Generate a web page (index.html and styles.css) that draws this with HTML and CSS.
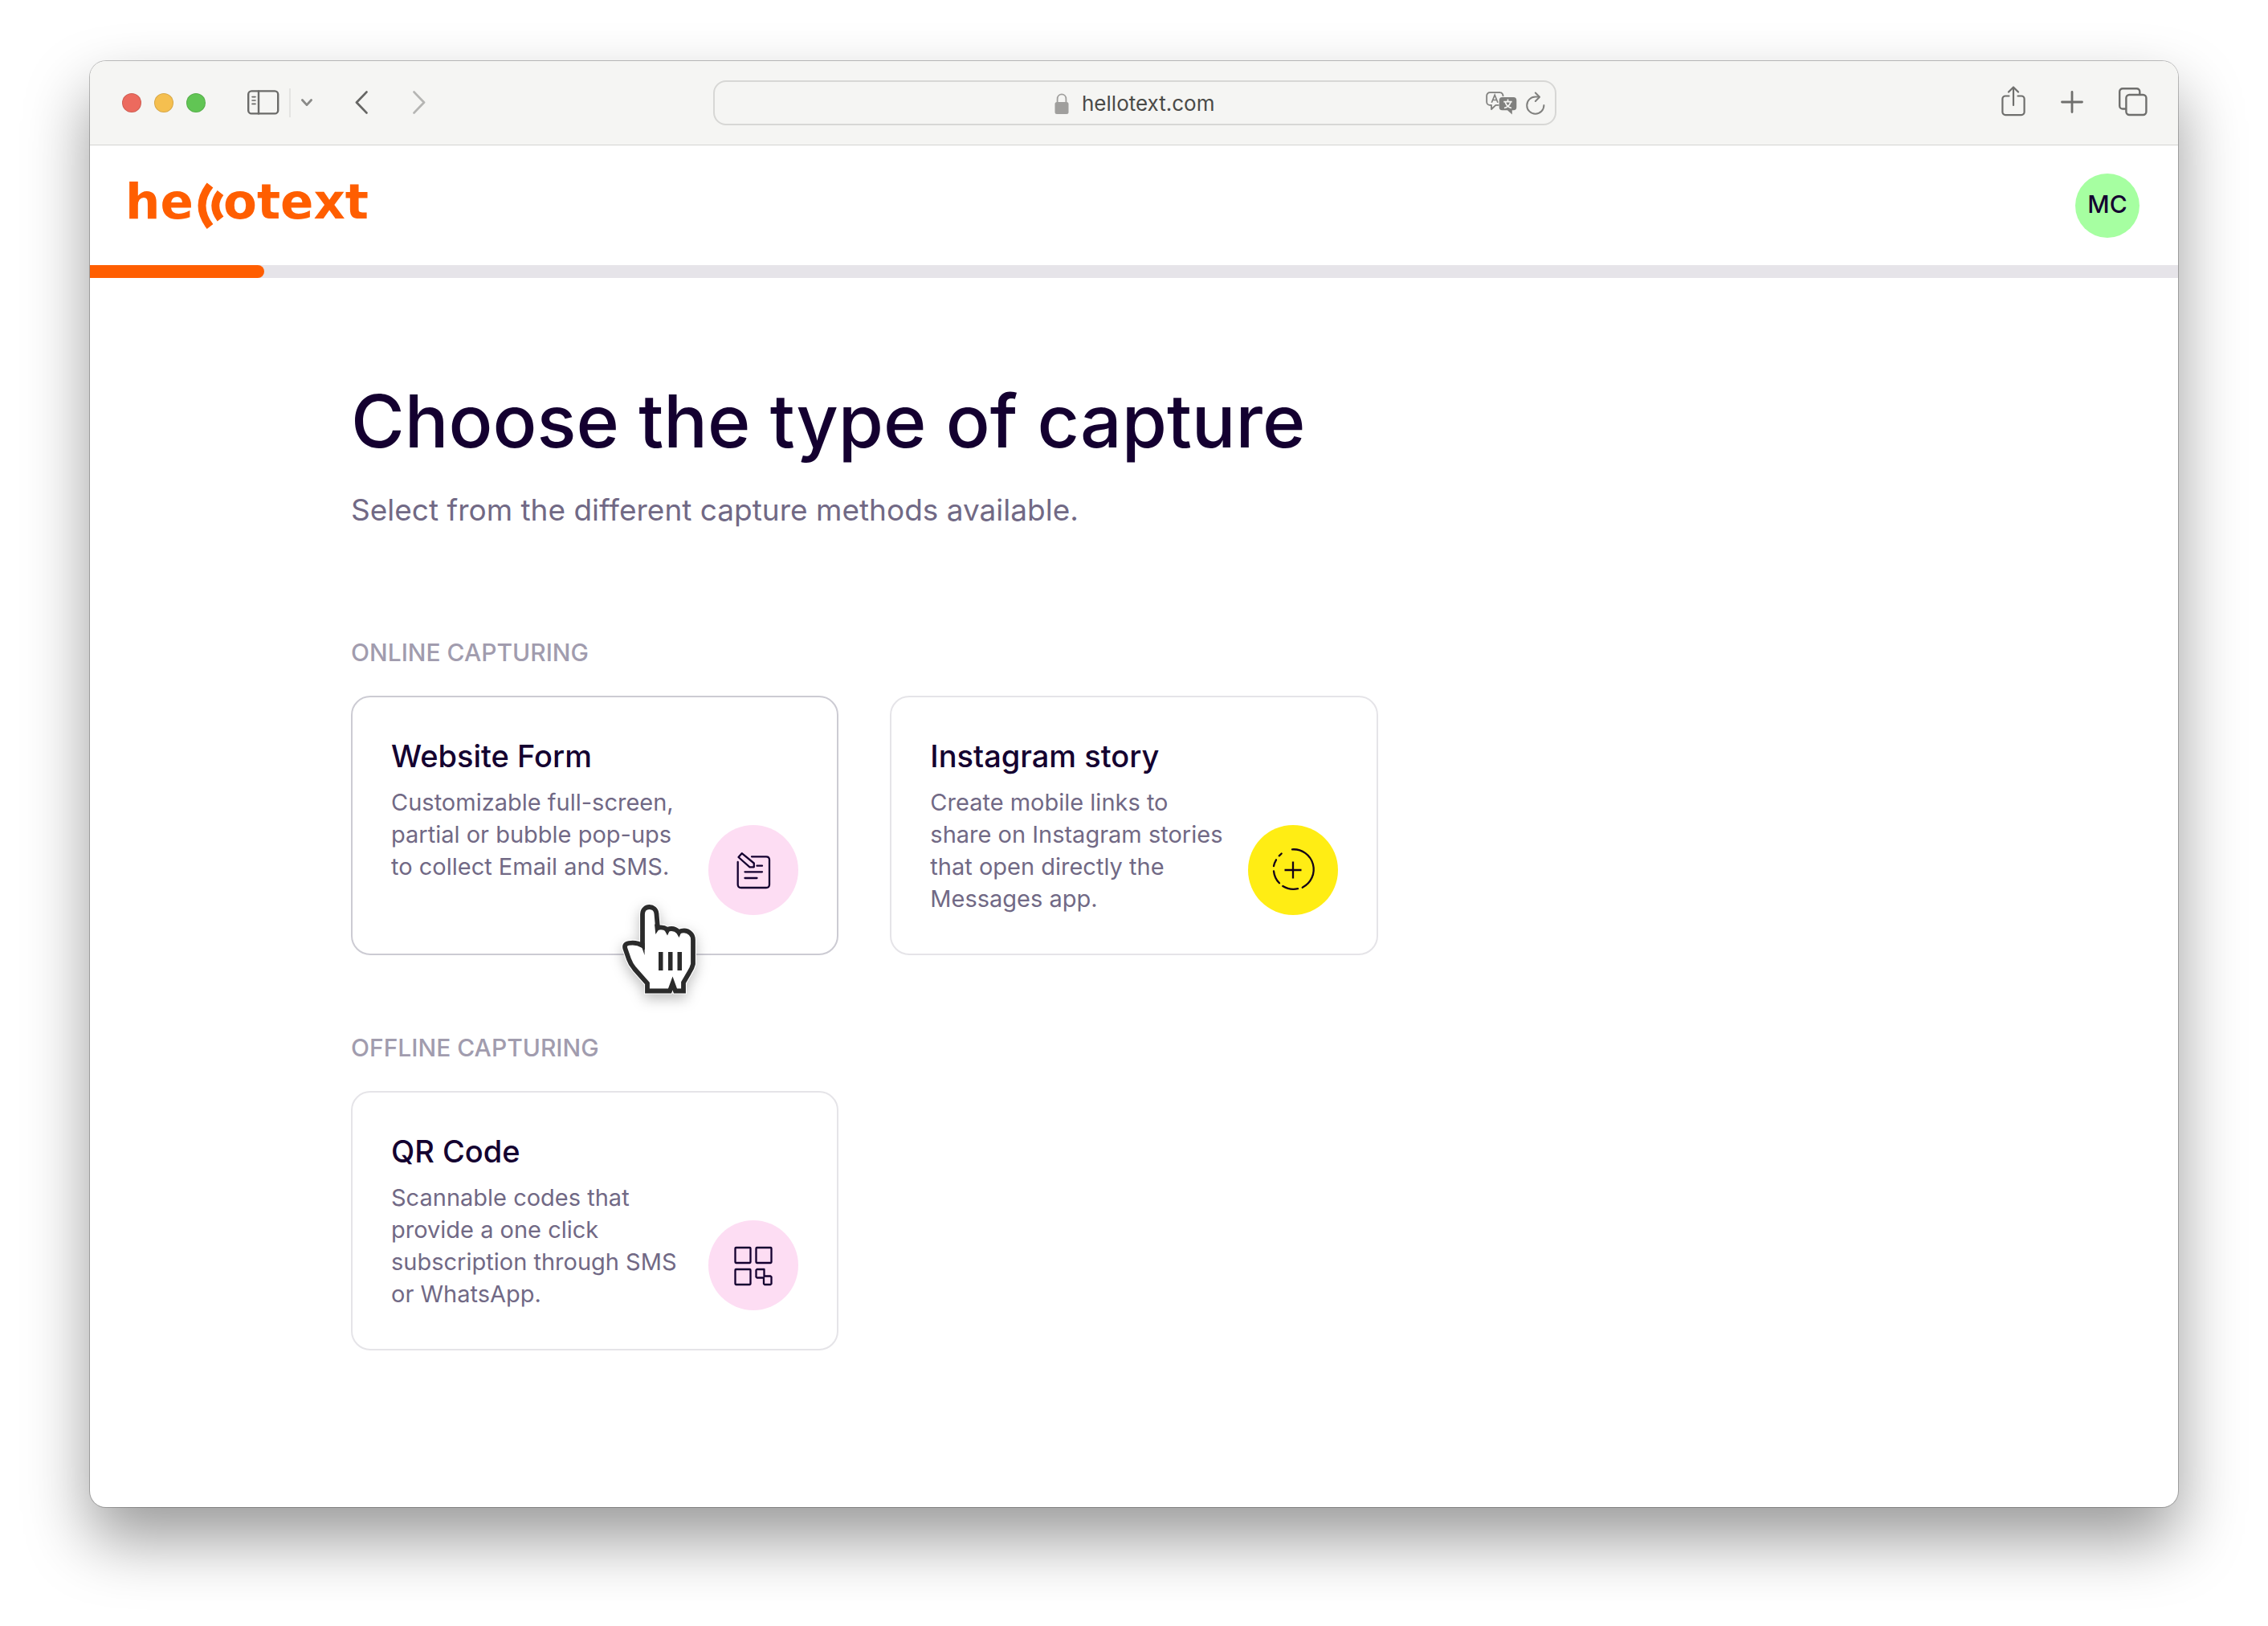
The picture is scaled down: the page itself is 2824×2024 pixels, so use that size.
FILE: index.html
```
<!DOCTYPE html>
<html lang="en">
<head>
<meta charset="utf-8">
<meta name="viewport" content="width=device-width, initial-scale=1">
<title>Hellotext</title>
<link rel="stylesheet" href="styles.css">
</head>
<body>
<div class="window">
  <div class="toolbar">
    <div class="toolbar-left">
      <div class="lights">
        <button class="light light-close" aria-label="Close"></button>
        <button class="light light-min" aria-label="Minimize"></button>
        <button class="light light-max" aria-label="Zoom"></button>
      </div>
      <div class="sidebar-controls">
        <button class="tool" aria-label="Show sidebar">
          <svg width="40" height="32" viewBox="0 0 40 32" fill="none" stroke="#6b6b69" stroke-width="2.4" stroke-linecap="round"><rect x="1.2" y="1.4" width="37" height="28" rx="4"/><path d="M14 1.4V29.4"/><path d="M6 8.6H10M6 13H10M6 17.4H10" stroke-width="1.6"/></svg>
        </button>
        <span class="divider"></span>
        <button class="tool" aria-label="Sidebar options">
          <svg width="16" height="12" viewBox="0 0 16 12" fill="none" stroke="#8a8a88" stroke-width="2.8" stroke-linecap="round" stroke-linejoin="round"><path d="M2.4 2.5L8 8.6L13.6 2.5"/></svg>
        </button>
      </div>
      <div class="history">
        <button class="tool" aria-label="Back">
          <svg width="16" height="30" viewBox="0 0 16 30" fill="none" stroke="#666664" stroke-width="2.8" stroke-linecap="round" stroke-linejoin="round"><path d="M14.4 1.6L2 14.5L14.4 27.4"/></svg>
        </button>
        <button class="tool" aria-label="Forward">
          <svg width="16" height="30" viewBox="0 0 16 30" fill="none" stroke="#b5b5b3" stroke-width="2.8" stroke-linecap="round" stroke-linejoin="round"><path d="M1.6 1.6L14 14.5L1.6 27.4"/></svg>
        </button>
      </div>
    </div>
    <div class="address">
      <label class="address-field">
        <svg width="18" height="28" viewBox="0 0 18 28" role="img" aria-label="Secure"><rect x="0.5" y="12" width="17" height="15" rx="2.5" fill="#a09f9d"/><path d="M3.6 13V8.4C3.6 0.4 14.4 0.4 14.4 8.4V13" fill="none" stroke="#a09f9d" stroke-width="1.8"/></svg>
        <input class="address-input" type="text" value="hellotext.com" aria-label="Address">
      </label>
      <div class="address-actions">
        <button class="tool" aria-label="Translate">
          <svg width="40" height="30" viewBox="0 0 40 30"><path d="M18 1.2H5A3.8 3.8 0 0 0 1.2 5V13A3.8 3.8 0 0 0 5 16.8H7V22L12.4 16.8H16.5M21.5 6V5A3.8 3.8 0 0 0 17.7 1.2" fill="none" stroke="#80807e" stroke-width="1.8" stroke-linejoin="round"/><path d="M7.3 13.8L11.2 4.2L15 13.8M8.6 10.5H13.8" fill="none" stroke="#80807e" stroke-width="1.7"/><path d="M20.5 7H34.5A3.8 3.8 0 0 1 38.3 10.8V19.5A3.8 3.8 0 0 1 34.5 23.3H32.8V28.5L27 23.3H20.5A3.8 3.8 0 0 1 16.7 19.5V10.8A3.8 3.8 0 0 1 20.5 7Z" fill="#80807e"/><path d="M27.5 9.5V12M22.3 12.7H32.7M31 13C30 16.5 27 19.5 23 20.5M24.2 13C25.2 16.5 28 19.5 32 20.5" fill="none" stroke="#f5f5f3" stroke-width="1.7"/></svg>
        </button>
        <button class="tool" aria-label="Reload">
          <svg width="24" height="30" viewBox="0 0 24 30" fill="none" stroke="#80807e" stroke-width="2" stroke-linecap="round" stroke-linejoin="round"><path d="M22.4 17A10.6 10.6 0 1 1 11.8 6.500H16.5"/><path d="M11.8 1.5L17 6.7L11.8 12"/></svg>
        </button>
      </div>
    </div>
    <div class="toolbar-right">
      <button class="tool" aria-label="Share">
        <svg width="30" height="42" viewBox="0 0 30 42" fill="none" stroke="#6f6f6d" stroke-width="2.2" stroke-linecap="round" stroke-linejoin="round"><path d="M9.5 12.5H5A3.6 3.6 0 0 0 1.4 16.1V32.5A3.6 3.6 0 0 0 5 36.1H25A3.6 3.6 0 0 0 28.6 32.5V16.1A3.6 3.6 0 0 0 25 12.5H20.5"/><path d="M15 24V1.5M9 7.5L15 1.5L21 7.5"/></svg>
      </button>
      <button class="tool" aria-label="New tab">
        <svg width="28" height="30" viewBox="0 0 28 30" fill="none" stroke="#6f6f6d" stroke-width="2.8" stroke-linecap="round"><path d="M14 1.5V26.5M1.5 14H26.5"/></svg>
      </button>
      <button class="tool" aria-label="Tab overview">
        <svg width="36" height="38" viewBox="0 0 36 38" fill="none" stroke="#6f6f6d" stroke-width="2.4"><rect x="9.4" y="9" width="25" height="25" rx="4"/><path d="M9.4 26.5H5A3.8 3.8 0 0 1 1.2 22.7V5A3.8 3.8 0 0 1 5 1.2H22.5A3.8 3.8 0 0 1 26.3 5V9"/></svg>
      </button>
    </div>
  </div>

  <header class="header">
    <a class="logo" href="#" aria-label="hellotext">
      <svg width="320" height="86" viewBox="-4 -12 320 86">
        <text class="logo-text" x="-4" y="47">he</text>
        <path d="M101.500 5.500Q81.500 31 101.500 57M114.500 15Q102 31 114.500 47.500" fill="none" stroke="#ff5e00" stroke-width="9.700"/>
        <text class="logo-text" x="118" y="47">otext</text>
      </svg>
    </a>
    <button class="avatar">MC</button>
  </header>
  <div class="progress" role="progressbar" aria-label="Setup progress" aria-valuemin="0" aria-valuemax="12" aria-valuenow="1"><div class="progress-fill" style="width: 8.35%"></div></div>

  <main class="content">
    <h1 class="title">Choose the type of capture</h1>
    <p class="subtitle">Select from the different capture methods available.</p>

    <section class="group">
      <h2 class="group-label">ONLINE CAPTURING</h2>
      <div class="cards">
        <a class="card card-hover" href="#">
          <div class="card-text">
            <h3 class="card-title">Website Form</h3>
            <p class="card-desc">Customizable full-screen, partial or bubble pop-ups to collect Email and SMS.</p>
          </div>
          <span class="badge badge-pink">
            <svg viewBox="0 0 112 112" fill="none" stroke="#140030" stroke-width="2.3" stroke-linecap="round" stroke-linejoin="round"><path d="M54 39.3H72Q76 39.3 76 43.3V74Q76 78 72 78H40.7Q36.7 78 36.7 74V46"/><path d="M41.7 35.2L37.5 40L51.5 52.3H56.8V47.5Z"/><path d="M60.5 50.7H67M45.5 58.3H67M45.5 66H60.5"/></svg>
          </span>
          <svg class="cursor" width="104" height="124" viewBox="10 12 104 124"><path d="M45 123.5V114L29 96Q24 90 22 84L17.5 71Q15.5 65 22 64Q32 62.5 39 67V28C39 16 56 16 56.5 28L58 45Q64 43 70 47Q78 44 84 50Q93 46 99 52Q102 55 102 60V90Q101 95 97 101L90 113V123.5H80L76.5 114L73 123.5Z" fill="#fff" stroke="#fff" stroke-width="8"/><path d="M45 123.5V114L29 96Q24 90 22 84L17.5 71Q15.5 65 22 64Q32 62.5 39 67V28C39 16 56 16 56.5 28L58 45Q64 43 70 47Q78 44 84 50Q93 46 99 52Q102 55 102 60V90Q101 95 97 101L90 113V123.5H80L76.5 114L73 123.5Z" fill="#fff" stroke="#2b2b2b" stroke-width="5.8"/><path d="M36.5 64L41.6 79V64ZM54 40L55.3 53L60 46ZM66.5 48L70 54.5L73 48ZM80.5 50L84.5 57L87.5 50ZM71 125L76.5 109L82 125H78L76.5 121.5L75 125ZM59 75H64.5V98H59ZM71 75H76.5V98H71ZM82.5 75H88V98H82.5Z" fill="#2b2b2b"/></svg>
        </a>
        <a class="card" href="#">
          <div class="card-text">
            <h3 class="card-title">Instagram story</h3>
            <p class="card-desc">Create mobile links to share on Instagram stories that open directly the Messages app.</p>
          </div>
          <span class="badge badge-yellow">
            <svg viewBox="0 0 112 112" fill="none" stroke="#140018" stroke-width="2.3" stroke-linecap="round"><path d="M55 30.3A25 25 0 0 1 67.7 77.7M62 79.2A25 25 0 0 1 43.3 76M39 72.3A25 25 0 0 1 32 57.3M32 51A25 25 0 0 1 35 43.3M38.7 38.3L41.7 35.5"/><path d="M56 45.5V66.5M45.5 56H66.5" stroke-linecap="butt"/></svg>
          </span>
        </a>
      </div>
    </section>

    <section class="group">
      <h2 class="group-label">OFFLINE CAPTURING</h2>
      <div class="cards">
        <a class="card" href="#">
          <div class="card-text">
            <h3 class="card-title">QR Code</h3>
            <p class="card-desc">Scannable codes that provide a one click subscription through SMS or WhatsApp.</p>
          </div>
          <span class="badge badge-pink">
            <svg viewBox="0 0 112 112" fill="none" stroke="#140030" stroke-width="2.3" stroke-linejoin="round"><rect x="33.5" y="34" width="19" height="19" rx="1"/><rect x="59.5" y="34" width="19" height="19" rx="1"/><rect x="33.5" y="61" width="19" height="19" rx="1"/><path d="M60.5 61H69.5V69.5H77.5L78.5 70.5V79L77.5 80H70L69 79V71.5H60.5L59.5 70.5V62Z"/></svg>
          </span>
        </a>
      </div>
    </section>
  </main>
</div>
</body>
</html>
```
FILE: styles.css
```
* {
  box-sizing: border-box;
}

body {
  margin: 0;
  min-height: 100vh;
  padding: 76px 112px 148px;
  display: flex;
  flex-direction: column;
  background: #fff;
  color: #140030;
  font-family: Inter, "Liberation Sans", sans-serif;
}

h1, h2, h3, p {
  margin: 0;
}

button {
  padding: 0;
  border: 0;
  background: none;
  font: inherit;
  color: inherit;
}

svg {
  display: block;
}

.window {
  flex: 1;
  border-radius: 20px;
  background: #fff;
  box-shadow: 0 0 0 1px rgba(0, 0, 0, 0.24), 0 40px 80px rgba(0, 0, 0, 0.4);
}

/* Browser toolbar */
.toolbar {
  display: grid;
  grid-template-columns: 1fr min(1050px, 42%) 1fr;
  align-items: center;
  height: 105px;
  padding: 0 38px 0 40px;
  border-bottom: 1px solid #d4d4d2;
  border-radius: 20px 20px 0 0;
  background: #f5f5f3;
}

.toolbar-left,
.lights,
.sidebar-controls,
.history,
.toolbar-right {
  display: flex;
  align-items: center;
}

.lights {
  gap: 16px;
  margin-right: 52px;
}

.light {
  width: 24px;
  height: 24px;
  border: 1px solid rgba(0, 0, 0, 0.12);
  border-radius: 50%;
}

.light-close { background: #ec6a5e; }
.light-min { background: #f5bf4f; }
.light-max { background: #61c554; }

.sidebar-controls {
  gap: 12px;
  margin-right: 52px;
}

.divider {
  width: 2px;
  height: 36px;
  background: #e4e4e2;
}

.history {
  gap: 56px;
}

.toolbar-right {
  justify-content: flex-end;
  gap: 44px;
}

.address {
  display: grid;
  grid-template-columns: 1fr auto 1fr;
  align-items: center;
  height: 56px;
  padding: 2px 12px 0;
  border: 2px solid #d7d7d5;
  border-radius: 16px;
}

.address-field {
  grid-column: 2;
  display: flex;
  align-items: center;
  gap: 16px;
}

.address-input {
  width: 166px;
  padding: 0;
  border: 0;
  outline: 0;
  background: none;
  color: #4a4a48;
  font: 400 26px/32px Inter, "Liberation Sans", sans-serif;
}

.address-actions {
  display: flex;
  justify-content: flex-end;
  gap: 10px;
}

/* App header */
.header {
  display: flex;
  align-items: center;
  justify-content: space-between;
  height: 149px;
  padding: 0 48px 0 44px;
}

.logo-text {
  font: 700 61px "DejaVu Sans", sans-serif;
  fill: #ff5e00;
}

.avatar {
  width: 80px;
  height: 80px;
  padding-bottom: 3px;
  border-radius: 50%;
  background: #a6ffa1;
  font-size: 30px;
  font-weight: 500;
}

.progress {
  height: 16px;
  background: #e6e4e9;
}

.progress-fill {
  height: 100%;
  border-radius: 0 8px 8px 0;
  background: #ff5e00;
}

/* Page */
.content {
  padding: 128px 12.5%;
}

.title {
  margin-bottom: 36px;
  font-size: 91px;
  line-height: 100px;
  font-weight: 500;
}

.subtitle {
  margin-bottom: 134px;
  color: #716985;
  font-size: 37px;
  line-height: 50px;
}

.group + .group {
  margin-top: 97px;
}

.group-label {
  margin-bottom: 36px;
  color: #a19cae;
  font-size: 30px;
  line-height: 36px;
  font-weight: 500;
}

.cards {
  display: grid;
  grid-template-columns: repeat(3, 1fr);
  gap: 64px;
}

.card {
  position: relative;
  display: flex;
  align-items: flex-end;
  gap: 24px;
  padding: 48px;
  border: 2px solid #e5e4e8;
  border-radius: 24px;
  color: inherit;
  text-decoration: none;
}

.card-hover {
  border-color: #cccbd3;
}

.card-text {
  flex: 1;
  align-self: flex-start;
}

.card-title {
  margin-bottom: 12px;
  font-size: 38px;
  line-height: 51px;
  font-weight: 500;
}

.card-desc {
  color: #716985;
  font-size: 29px;
  line-height: 40px;
}

.badge {
  flex: none;
  width: 112px;
  height: 112px;
  border-radius: 50%;
}

.badge-pink { background: #fdddf3; }
.badge-yellow { background: #ffed14; }

.cursor {
  position: absolute;
  left: 332px;
  top: 254px;
  overflow: visible;
  filter: drop-shadow(0 6px 8px rgba(0, 0, 0, 0.25));
}
```
